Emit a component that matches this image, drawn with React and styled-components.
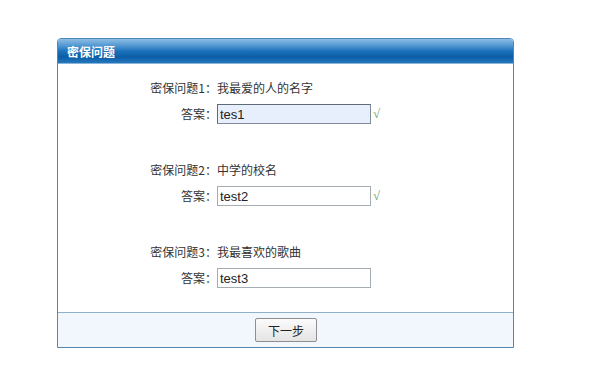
import React from "react";
import styled, { createGlobalStyle } from "styled-components";

const Global = createGlobalStyle`
  body {
    margin: 0;
    background: #fff;
    font-family: "Noto Sans CJK SC", "Liberation Sans", sans-serif;
    font-size: 12px;
    color: #333;
  }
`;

const Page = styled.div`
  padding: 38px 0 0 57px;
`;

const Panel = styled.div`
  width: 455px;
  border: 1px solid #4f88b4;
  border-radius: 4px 4px 0 0;
`;

const Header = styled.div`
  height: 24px;
  line-height: 25px;
  padding-left: 9px;
  color: #fff;
  font-weight: bold;
  font-size: 12px;
  border-radius: 3px 3px 0 0;
  border-bottom: 1px solid #8ab4d8;
  background: linear-gradient(
    to bottom,
    #8dbde4 0%,
    #4d95d0 30%,
    #1c72bb 50%,
    #0b5ea6 75%,
    #2677bd 100%
  );
`;

const Body = styled.div`
  padding: 13px 0 23px;
  display: flex;
  flex-direction: column;
  gap: 34px;
`;

const Group = styled.div`
  display: grid;
  grid-template-columns: 159px auto;
  row-gap: 4px;
  align-items: center;
`;

const Label = styled.div`
  text-align: right;
  line-height: 22px;
`;

const Value = styled.div`
  line-height: 22px;
  display: flex;
  align-items: center;
`;

const Input = styled.input`
  box-sizing: border-box;
  width: 154px;
  height: 20px;
  margin: 0;
  padding: 0 2px;
  border: 1px solid ${(p) => (p.$focus ? "#7d8b9a" : "#a5acb2")};
  border-top-color: ${(p) => (p.$focus ? "#5f6b77" : "#a5acb2")};
  border-left-color: ${(p) => (p.$focus ? "#5f6b77" : "#a5acb2")};
  background: ${(p) => (p.$focus ? "#e8effc" : "#fff")};
  font-family: "Liberation Sans", Arial, sans-serif;
  font-size: 13px;
  color: #222;
  outline: none;
`;

const Check = styled.span`
  margin-left: 2px;
  color: #6f9a66;
  font-family: "Liberation Serif", serif;
  font-size: 13px;
`;

const Footer = styled.div`
  height: 34px;
  border-top: 1px solid #8fb0c8;
  background: #f1f7fd;
  display: flex;
  justify-content: center;
  align-items: center;
`;

const Button = styled.button`
  width: 62px;
  height: 24px;
  margin-left: 1px;
  border: 1px solid #8e8e8e;
  border-radius: 2px;
  background: linear-gradient(to bottom, #fbfbfb, #e4e4e4);
  font-family: "Noto Sans CJK SC", sans-serif;
  font-size: 12px;
  color: #222;
  padding: 0;
`;

const questions = [
  { no: 1, q: "我最爱的人的名字", a: "tes1", ok: true, focus: true },
  { no: 2, q: "中学的校名", a: "test2", ok: true },
  { no: 3, q: "我最喜欢的歌曲", a: "test3", ok: false },
];

export default function App() {
  return (
    <Page>
      <Global />
      <Panel>
        <Header>密保问题</Header>
        <Body>
          {questions.map((item) => (
            <Group key={item.no}>
              <Label>密保问题{item.no}：</Label>
              <Value>{item.q}</Value>
              <Label>答案：</Label>
              <Value>
                <Input $focus={item.focus} defaultValue={item.a} />
                {item.ok && <Check>√</Check>}
              </Value>
            </Group>
          ))}
        </Body>
        <Footer>
          <Button>下一步</Button>
        </Footer>
      </Panel>
    </Page>
  );
}
